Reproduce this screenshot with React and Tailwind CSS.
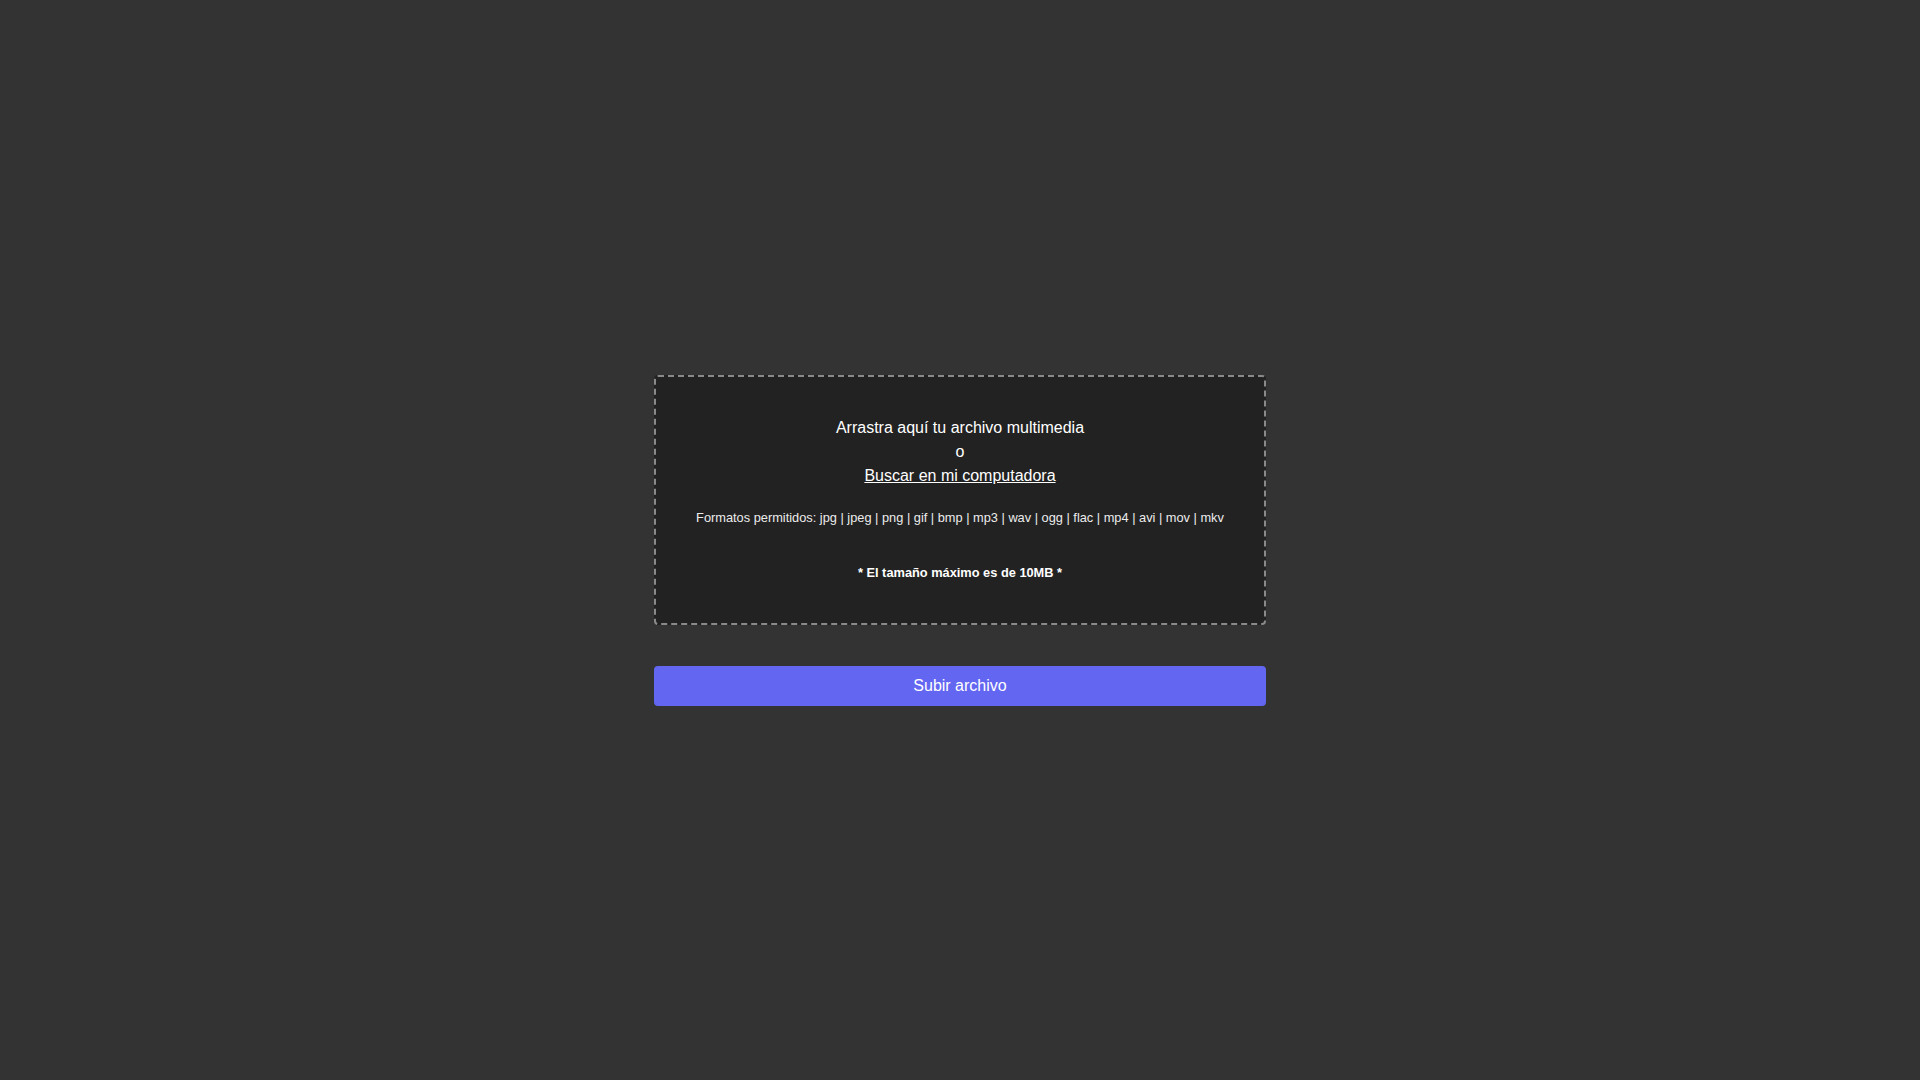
import React from "react";

const formats = ["jpg", "jpeg", "png", "gif", "bmp", "mp3", "wav", "ogg", "flac", "mp4", "avi", "mov", "mkv"];

const App = () => {
  return (
    <div className="min-h-screen w-full bg-[#333333] flex items-center justify-center font-['Liberation_Sans',Arial,sans-serif]">
      <div className="w-[612px] flex flex-col gap-[41px]">
        <div className="border-2 border-dashed border-[#8a8a8a] rounded bg-[#222222] px-6 pt-[39px] pb-[40px] text-center">
          <p className="text-white text-base leading-6">
            Arrastra aquí tu archivo multimedia
            <br />o<br />
            <a href="#" className="underline">
              Buscar en mi computadora
            </a>
          </p>
          <p className="mt-[20px] text-[12.8px] leading-5 text-[#ececec]">
            Formatos permitidos: {formats.join(" | ")}
          </p>
          <p className="mt-[35px] text-[12.8px] leading-5 font-bold text-white">
            * El tamaño máximo es de 10MB *
          </p>
        </div>
        <button className="h-10 w-full rounded bg-[#6366f1] text-white text-base">
          Subir archivo
        </button>
      </div>
    </div>
  );
};

export default App;
